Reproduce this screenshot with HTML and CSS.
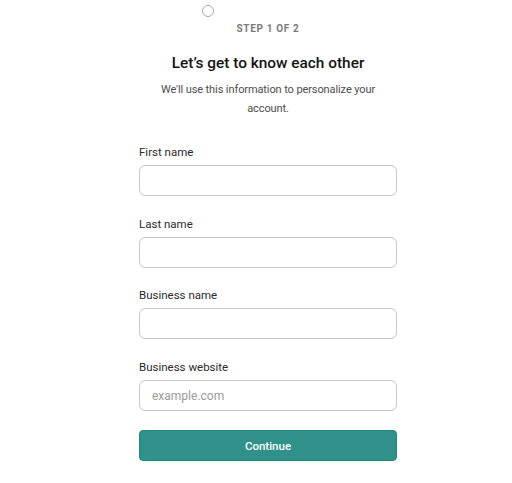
FILE: index.html
```html
<!DOCTYPE html>
<html>
<head>
<meta charset="utf-8">
<link rel="stylesheet" href="styles.css">
</head>
<body>
<div class="page">
  <span class="dot"></span>
  <div class="step">STEP 1 OF 2</div>
  <h1 class="title">Let’s get to know each other</h1>
  <p class="sub">We'll use this information to personalize your account.</p>
  <form class="form">
    <label class="field">
      <span class="label">First name</span>
      <input class="input" type="text">
    </label>
    <label class="field">
      <span class="label">Last name</span>
      <input class="input" type="text">
    </label>
    <label class="field">
      <span class="label">Business name</span>
      <input class="input" type="text">
    </label>
    <label class="field field-last">
      <span class="label">Business website</span>
      <input class="input" type="text" placeholder="example.com">
    </label>
    <button class="btn" type="button">Continue</button>
  </form>
</div>
</body>
</html>
```
FILE: styles.css
```css
* { box-sizing: border-box; }
html, body { margin: 0; padding: 0; background: #fff; }
body { font-family: Roboto, "Noto Sans", Arial, sans-serif; color: #222; }
.page {
  width: 512px;
  padding: 5px 0 0 24px;
  display: flex;
  flex-direction: column;
  align-items: center;
}
.dot {
  align-self: flex-start;
  margin-left: 178px;
  width: 12px;
  height: 12px;
  border: 1px solid #a9a9a9;
  border-radius: 50%;
}
.step {
  margin-top: 5px;
  font-size: 10px;
  line-height: 14px;
  font-weight: 700;
  letter-spacing: 0.65px;
  color: #7a7a7a;
}
.title {
  margin: 16px 0 0;
  font-size: 15.4px;
  line-height: 22px;
  font-weight: 500;
  color: #141414;
}
.sub {
  margin: 6px 0 0;
  width: 230px;
  text-align: center;
  font-size: 11px;
  letter-spacing: -0.1px;
  line-height: 19px;
  color: #4d4d4d;
}
.form {
  margin-top: 26px;
  width: 258px;
  display: flex;
  flex-direction: column;
}
.field {
  display: flex;
  flex-direction: column;
  margin-bottom: 19.7px;
}
.field-last { margin-bottom: 19px; }
.label {
  font-size: 11.5px;
  line-height: 16px;
  color: #2a2a2a;
  margin-bottom: 5px;
}
.input {
  height: 31px;
  border: 1px solid #c8c8c8;
  border-radius: 6px;
  padding: 0 12px;
  font-family: inherit;
  font-size: 12px;
  color: #222;
  outline: none;
}
.input::placeholder { color: #9a9a9a; }
.btn {
  height: 31px;
  border: 1px solid #23857c;
  border-radius: 4px;
  background: #30918a;
  color: #fff;
  font-family: inherit;
  font-size: 11.5px;
  font-weight: 500;
}
```
